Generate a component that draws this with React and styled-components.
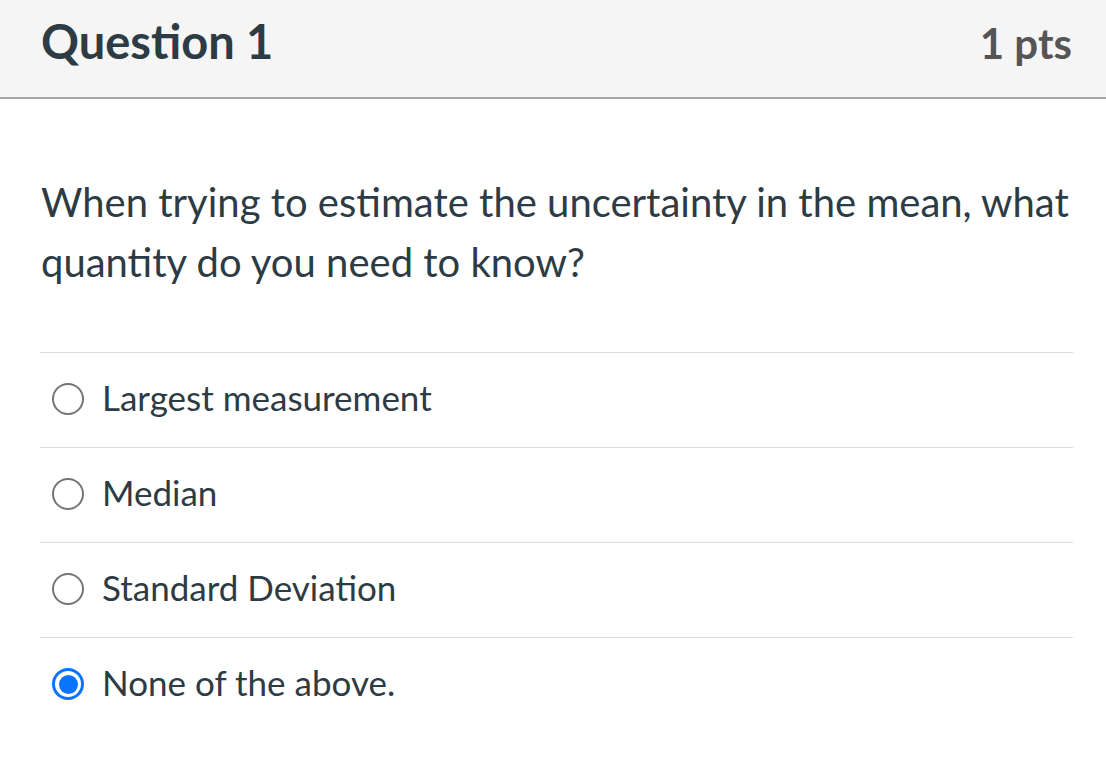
import React from "react";
import styled, { createGlobalStyle } from "styled-components";

const Global = createGlobalStyle`
  html, body { margin: 0; padding: 0; background: #fff; }
  body { font-family: Lato, "Noto Sans", sans-serif; color: #2d3b45; }
`;

const Header = styled.header`
  display: flex;
  justify-content: space-between;
  align-items: baseline;
  box-sizing: border-box;
  height: 99px;
  padding: 18px 34px 0 41px;
  background: #f5f5f5;
  border-bottom: 2px solid #a5a5a5;
`;

const Title = styled.h2`
  margin: 0;
  font-size: 47px;
  font-weight: 700;
  color: #2d3b45;
  line-height: 1;
`;

const Points = styled.span`
  font-size: 42px;
  font-weight: 700;
  color: #555555;
  line-height: 1;
`;

const Body = styled.main`
  padding: 73px 33px 0 41px;
`;

const Prompt = styled.p`
  margin: 0 0 60px;
  font-size: 40px;
  line-height: 60px;
  font-variant-ligatures: common-ligatures;
`;

const Answers = styled.div`
  margin-left: -1px;
  border-top: 1px solid #dcdcdc;
`;

const Row = styled.label`
  display: flex;
  align-items: center;
  gap: 18px;
  padding: 22px 0 28px 12px;
  border-bottom: ${(p) => (p.$last ? "none" : "1px solid #dcdcdc")};
  font-size: 35px;
  line-height: 44px;
`;

const Radio = styled.span`
  flex: none;
  width: 32px;
  height: 32px;
  box-sizing: border-box;
  border-radius: 50%;
  border: ${(p) => (p.$checked ? "3px solid #0b74fe" : "2.5px solid #757575")};
  background: #fff;
  display: flex;
  align-items: center;
  justify-content: center;
  margin-top: 4px;
  &::after {
    content: "";
    display: ${(p) => (p.$checked ? "block" : "none")};
    width: 19px;
    height: 19px;
    border-radius: 50%;
    background: #0b74fe;
  }
`;

const answers = [
  "Largest measurement",
  "Median",
  "Standard Deviation",
  "None of the above.",
];

export default function App() {
  return (
    <>
      <Global />
      <Header>
        <Title>Question 1</Title>
        <Points>1 pts</Points>
      </Header>
      <Body>
        <Prompt>
          When trying to estimate the uncertainty in the mean, what quantity do
          you need to know?
        </Prompt>
        <Answers>
          {answers.map((a, i) => (
            <Row key={a} $last={i === answers.length - 1}>
              <Radio $checked={i === 3} />
              {a}
            </Row>
          ))}
        </Answers>
      </Body>
    </>
  );
}
